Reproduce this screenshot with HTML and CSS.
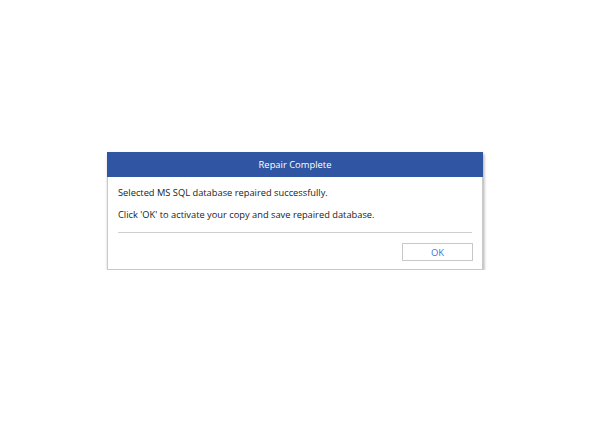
FILE: index.html
```html
<!DOCTYPE html>
<html lang="en">
<head>
    <meta charset="UTF-8">
    <title>Repair Complete</title>
    <link rel="stylesheet" href="styles.css">
</head>
<body>
    <div class="dialog">
        <div class="dialog-title">Repair Complete</div>
        <div class="dialog-body">
            <p>Selected MS SQL database repaired successfully.</p>
            <p>Click 'OK' to activate your copy and save repaired database.</p>
        </div>
        <div class="dialog-footer">
            <button class="btn-ok">OK</button>
        </div>
    </div>
</body>
</html>
```

FILE: styles.css
```css
body {
    margin: 0;
    background-color: #ffffff;
    font-family: "Open Sans", "Noto Sans", Arial, sans-serif;
    padding-top: 152px;
}

.dialog {
    width: 374px;
    margin-left: 107px;
    background-color: #ffffff;
    border: 1px solid #c9c9c9;
    border-top: 0;
    box-shadow: 1px 2px 3px rgba(0, 0, 0, 0.35);
}

.dialog-title {
    background-color: #2f55a3;
    color: #ffffff;
    height: 25px;
    line-height: 25px;
    margin: 0 -1px;
    text-align: center;
    font-size: 9.4px;
}

.dialog-body {
    margin: 0 10px;
    padding: 5px 0 6px;
    border-bottom: 1px solid #cfcfcf;
}

.dialog-body p {
    margin: 0;
    font-size: 9.3px;
    line-height: 22px;
    color: #1a1a1a;
}

.dialog-footer {
    display: flex;
    justify-content: flex-end;
    padding: 10px 9px 8px;
}

.btn-ok {
    width: 71px;
    height: 18px;
    background: #ffffff;
    border: 1px solid #c8c8c8;
    color: #2b7de0;
    font-family: inherit;
    font-size: 9.4px;
    padding: 0;
}
```
